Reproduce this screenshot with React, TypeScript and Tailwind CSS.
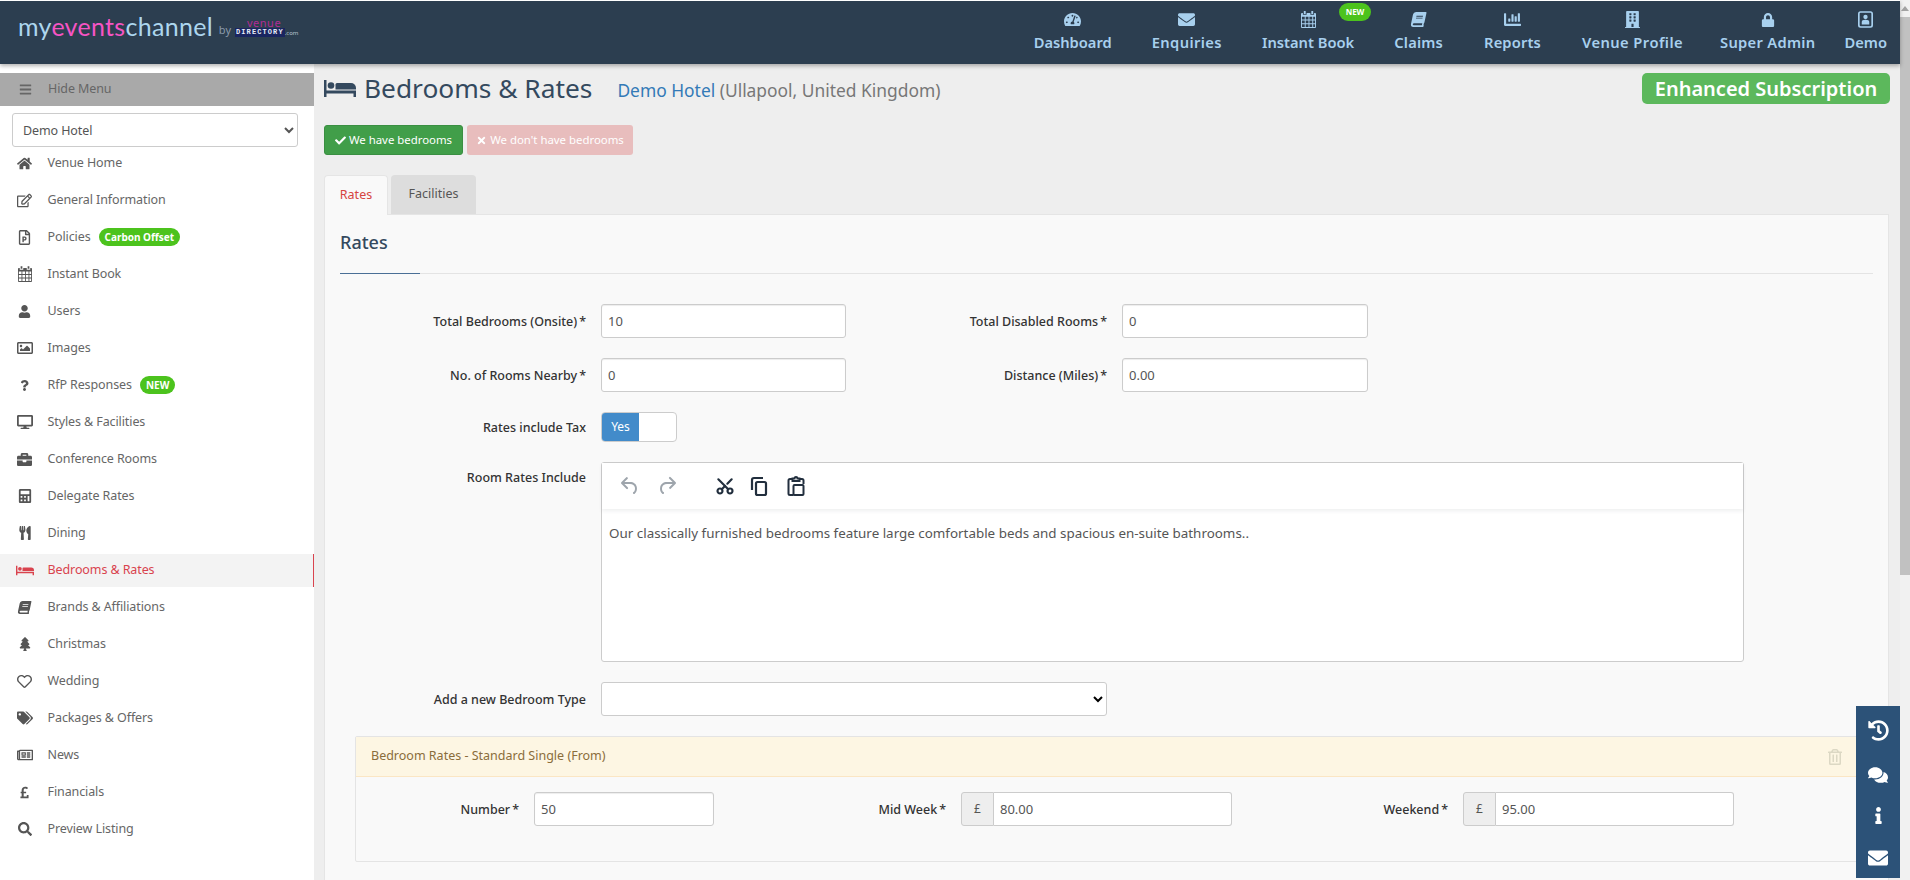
import {
  FaBars, FaBook, FaBriefcase, FaBuilding, FaCalculator, FaChartBar, FaCheck, FaComments, FaDesktop,
  FaEnvelope, FaHistory, FaHome, FaInfo, FaLock, FaPoundSign, FaQuestion,
  FaRegEdit, FaRegFilePowerpoint, FaRegHeart, FaRegImage, FaRegNewspaper, FaRegTrashAlt, FaSearch,
  FaTachometerAlt, FaTags, FaTimes, FaTree, FaUser, FaUtensils,
} from "react-icons/fa";
import { Scissors } from "lucide-react";
import type { ReactNode } from "react";

const FONT = "font-['Noto_Sans','Open_Sans',sans-serif]";

function BedIcon({ className }: { className?: string }) {
  return (
    <svg viewBox="0 0 32 17" className={className} fill="currentColor">
      <path d="M0 0h2.500v10.500H32V17h-2.500v-3.500h-27V17H0z" />
      <circle cx="7" cy="5.500" r="3.300" />
      <path d="M11.500 9.500V4.500A1.500 1.500 0 0 1 13 3h14a5 5 0 0 1 5 5v1.500z" />
    </svg>
  );
}

function CalendarIcon({ className }: { className?: string }) {
  return (
    <svg viewBox="0 0 16 18" className={className} fill="currentColor">
      <path d="M3 0h2v3H3zM11 0h2v3h-2z" />
      <path
        fillRule="evenodd"
        d="M1 2h1v2h4V2h4v2h4V2h1a1 1 0 0 1 1 1v14a1 1 0 0 1-1 1H1a1 1 0 0 1-1-1V3a1 1 0 0 1 1-1zM1 6v3h3V6zm4 0v3h3V6zm4 0v3h3V6zm4 0v3h2V6zM1 10v3h3v-3zm4 0v3h3v-3zm4 0v3h3v-3zm4 0v3h2v-3zM1 14v3h3v-3zm4 0v3h3v-3zm4 0v3h3v-3zm4 0v3h2v-3z"
      />
    </svg>
  );
}

function UserBoxIcon({ className }: { className?: string }) {
  return (
    <svg viewBox="0 0 18 20" className={className} fill="currentColor">
      <path
        fillRule="evenodd"
        d="M3 0h12a3 3 0 0 1 3 3v14a3 3 0 0 1-3 3H3a3 3 0 0 1-3-3V3a3 3 0 0 1 3-3zm0 2a1 1 0 0 0-1 1v14a1 1 0 0 0 1 1h12a1 1 0 0 0 1-1V3a1 1 0 0 0-1-1z"
      />
      <circle cx="9" cy="7" r="2.600" />
      <path d="M4.500 16v-3c0-1.600 1.400-2.600 4.500-2.600s4.500 1 4.500 2.600v3z" />
    </svg>
  );
}

const navItems: { label: string; icon: ReactNode; badge?: boolean; box: string; text: string }[] = [
  { label: "Dashboard", icon: <FaTachometerAlt className="size-[17px]" />, box: "px-[20px]", text: "" },
  { label: "Enquiries", icon: <FaEnvelope className="size-[17px]" />, box: "px-[20px]", text: "tracking-[0.4px]" },
  { label: "Instant Book", icon: <CalendarIcon className="h-[17px] w-[15px]" />, badge: true, box: "px-[20px]", text: "" },
  { label: "Claims", icon: <FaBook className="size-[15px] -skew-x-12" />, box: "pl-[20px] pr-[21px]", text: "tracking-[0.2px]" },
  { label: "Reports", icon: <FaChartBar className="size-[17px]" />, box: "pl-[20px] pr-[21px]", text: "tracking-[0.15px]" },
  { label: "Venue Profile", icon: <FaBuilding className="size-[17px]" />, box: "px-[20px]", text: "tracking-[0.45px]" },
  { label: "Super Admin", icon: <FaLock className="size-[14px]" />, box: "pl-[17px] pr-[15px]", text: "tracking-[0.3px]" },
  { label: "Demo", icon: <UserBoxIcon className="h-[17px] w-[15px]" />, box: "pl-[14px]", text: "" },
];

const sideItems: { label: string; icon: ReactNode; badge?: string; active?: boolean }[] = [
  { label: "Venue Home", icon: <FaHome className="size-[15px]" /> },
  { label: "General Information", icon: <FaRegEdit className="size-[15px]" /> },
  { label: "Policies", icon: <FaRegFilePowerpoint className="size-[15px]" />, badge: "Carbon Offset" },
  { label: "Instant Book", icon: <CalendarIcon className="h-[16px] w-[14px]" /> },
  { label: "Users", icon: <FaUser className="size-[13px]" /> },
  { label: "Images", icon: <FaRegImage className="size-[16px]" /> },
  { label: "RfP Responses", icon: <FaQuestion className="size-[11px]" />, badge: "NEW" },
  { label: "Styles & Facilities", icon: <FaDesktop className="size-[16px]" /> },
  { label: "Conference Rooms", icon: <FaBriefcase className="size-[15px]" /> },
  { label: "Delegate Rates", icon: <FaCalculator className="size-[14px]" /> },
  { label: "Dining", icon: <FaUtensils className="size-[14px]" /> },
  { label: "Bedrooms & Rates", icon: <BedIcon className="h-[11px] w-[18px]" />, active: true },
  { label: "Brands & Affiliations", icon: <FaBook className="size-[13px] -skew-x-12" /> },
  { label: "Christmas", icon: <FaTree className="size-[14px]" /> },
  { label: "Wedding", icon: <FaRegHeart className="size-[15px]" /> },
  { label: "Packages & Offers", icon: <FaTags className="size-[16px]" /> },
  { label: "News", icon: <FaRegNewspaper className="size-[16px]" /> },
  { label: "Financials", icon: <FaPoundSign className="size-[13px]" /> },
  { label: "Preview Listing", icon: <FaSearch className="size-[14px]" /> },
];

function Logo() {
  return (
    <div className="flex items-center pb-[12px] pl-[18px]">
      <span className="font-['Lato',sans-serif] text-[25px] leading-none tracking-[0.3px] text-[#add6ee]">
        my<span className="text-[#f654c4]">events</span>channel
      </span>
      <span className="ml-[6px] mt-[6px] text-[11px] leading-none text-[#8a9bab]">by</span>
      <div className="ml-[4px] flex flex-col items-start">
        <span className="ml-[12px] text-[11px] leading-[11px] tracking-[0.5px] text-[#b02c95]">venue</span>
        <div className="flex items-end">
          <span className="bg-[#1a2560] px-[1px] font-['Liberation_Mono',monospace] text-[7px] font-bold leading-[9px] tracking-[1.1px] text-[#e8ecf8]">
            DIRECTORY
          </span>
          <span className="text-[6px] leading-[8px] text-[#b8c4d0]">.com</span>
        </div>
      </div>
    </div>
  );
}

function Field({ value, className }: { value: string; className: string }) {
  return (
    <input
      readOnly
      value={value}
      className={`h-[34px] rounded-[3px] border border-[#ccc] bg-white px-[6px] text-[13px] text-[#555] shadow-[inset_0_1px_1px_rgba(0,0,0,0.075)] outline-none ${className}`}
    />
  );
}

function Label({ text, required, className }: { text: string; required?: boolean; className: string }) {
  return (
    <label className={`h-[34px] text-right text-[12.5px] font-medium leading-[36px] text-[#333] ${className}`}>
      {text}
      {required && <span className="ml-[2px]">*</span>}
    </label>
  );
}

function PoundField({ value, className }: { value: string; className: string }) {
  return (
    <div className={`flex h-[34px] ${className}`}>
      <span className="flex w-[33px] items-center justify-center rounded-l-[3px] border border-[#ccc] bg-[#eee] text-[12px] text-[#555]">
        £
      </span>
      <input
        readOnly
        value={value}
        className="h-[34px] min-w-0 flex-1 rounded-r-[3px] border border-l-0 border-[#ccc] bg-white px-[6px] text-[13px] text-[#555] outline-none"
      />
    </div>
  );
}

function EditorToolbar() {
  return (
    <div className="flex h-[46px] items-center bg-white pl-[16px] shadow-[0_2px_4px_rgba(34,47,62,0.08)]">
      <svg viewBox="0 0 24 24" className="size-[24px] text-[#9ea5ac]" fill="currentColor">
        <path d="M6.400 8H12c3.700 0 6.200 2 6.800 5.100.6 2.700-.4 5.600-2.300 6.800a1 1 0 0 1-1-1.800c1.100-.6 1.800-2.700 1.400-4.600-.5-2.100-2.100-3.500-4.900-3.500H6.400l3.300 3.300a1 1 0 1 1-1.400 1.400l-5-5a1 1 0 0 1 0-1.400l5-5a1 1 0 0 1 1.400 1.400L6.400 8z" />
      </svg>
      <svg viewBox="0 0 24 24" className="ml-[13px] size-[24px] text-[#9ea5ac]" fill="currentColor">
        <path d="M17.600 10H12c-2.800 0-4.400 1.400-4.900 3.500-.4 2 .3 4 1.400 4.600a1 1 0 1 1-1 1.800c-2-1.200-2.900-4.100-2.300-6.800.6-3 3-5.100 6.800-5.100h5.600l-3.300-3.300a1 1 0 1 1 1.400-1.400l5 5a1 1 0 0 1 0 1.400l-5 5a1 1 0 0 1-1.400-1.400l3.300-3.300z" />
      </svg>
      <Scissors className="ml-[36px] size-[20px] -rotate-90 text-[#222f3e]" strokeWidth={2.6} />
      <svg viewBox="0 0 24 24" className="ml-[12px] size-[24px] text-[#222f3e]" fill="none" stroke="currentColor" strokeWidth="2.200">
        <path d="M5 16V6a2 2 0 0 1 2-2h9" />
        <rect x="9" y="8" width="10" height="13" rx="1.500" />
      </svg>
      <svg viewBox="0 0 24 24" className="ml-[13px] size-[24px] text-[#222f3e]" fill="none" stroke="currentColor" strokeWidth="2">
        <path d="M8.500 5H6a1.500 1.500 0 0 0-1.500 1.500v13A1.500 1.500 0 0 0 6 21h3.500" />
        <path d="M15.500 5H18a1.500 1.500 0 0 1 1.500 1.500V10" />
        <path d="M8.500 7V4.500h2a1.500 1.500 0 0 1 3 0h2V7z" />
        <rect x="9.500" y="11" width="10" height="10" rx="1" />
      </svg>
    </div>
  );
}

export default function App() {
  return (
    <div className={`relative flex h-[880px] w-[1910px] overflow-hidden bg-[#eee] ${FONT}`}>
      <div className="flex w-[1900px] flex-col">
        <header className="relative z-10 flex h-[64px] shrink-0 items-center justify-between border-t border-white bg-[#2c3e50] shadow-[0_2px_4px_rgba(0,0,0,0.3)]">
          <Logo />
          <nav className="flex pr-[13px]">
            {navItems.map((item) => (
              <div key={item.label} className={`relative flex flex-col items-center text-[#a8d0ee] ${item.box}`}>
                <div className="flex h-[17px] items-center">{item.icon}</div>
                <span className={`mt-[2px] whitespace-nowrap text-[14.7px] font-semibold leading-[24px] ${item.text}`}>{item.label}</span>
                {item.badge && (
                  <span className="absolute left-[97px] top-[-8px] flex h-[18px] w-[32px] items-center justify-center rounded-[9px] bg-[#4cc31d] text-[8px] font-bold text-white">
                    NEW
                  </span>
                )}
              </div>
            ))}
          </nav>
        </header>

        <div className="flex min-h-0 flex-1">
          <aside className="flex w-[314px] shrink-0 flex-col bg-white pt-[9px] text-[12.5px] tracking-[-0.1px] text-[#666]">
            <div className="flex h-[33px] items-center bg-[#a9a9a9] pl-[19px] text-[#666]">
              <FaBars className="size-[13px]" />
              <span className="ml-[16px]">Hide Menu</span>
            </div>
            <div className="pl-[12px] pr-[16px] pt-[7px]">
              <select className="h-[34px] w-full rounded-[3px] border border-[#ccc] bg-white pl-[6px] text-[12.5px] text-[#555]">
                <option>Demo Hotel</option>
              </select>
            </div>
            <ul>
              {sideItems.map((item) => (
                <li
                  key={item.label}
                  className={`mb-[4px] flex h-[33px] items-center pb-[1px] ${item.active ? "border-r border-[#d9434e] bg-[#f3f3f3] text-[#d9434e]" : ""}`}
                >
                  <span className={`flex w-[47.5px] shrink-0 justify-center pl-[2px] ${item.active ? "" : "text-[#555]"}`}>{item.icon}</span>
                  <span>{item.label}</span>
                  {item.badge && (
                    <span className="ml-[8px] flex h-[18px] items-center rounded-[9px] bg-[#4cc31d] px-[6px] text-[10px] font-bold tracking-[0px] text-white">
                      {item.badge}
                    </span>
                  )}
                </li>
              ))}
            </ul>
          </aside>

          <main className="min-w-0 flex-1 pl-[10px] pr-[10px] pt-[9px]">
            <div className="flex h-[31px] items-center justify-between">
              <div className="flex items-center">
                <BedIcon className="h-[17px] w-[32px] text-[#34495e]" />
                <h1 className="ml-[8px] text-[26.300px] leading-[31px] text-[#34495e]">Bedrooms &amp; Rates</h1>
                <span className="ml-[25px] mt-[3px] text-[17.400px] text-[#777]">
                  <span className="text-[#337ab7]">Demo Hotel</span> (Ullapool, United Kingdom)
                </span>
              </div>
              <div className="flex h-[31px] w-[248px] items-center justify-center rounded-[5px] bg-[#5cb85c] text-[20px] font-semibold text-white">
                Enhanced Subscription
              </div>
            </div>

            <div className="mt-[21px] flex gap-[4px]">
              <button className="flex h-[30px] w-[139px] items-center justify-center gap-[3px] rounded-[3px] border border-[#3a8f42] bg-[#419e49] text-[11.400px] text-white">
                <FaCheck className="size-[11px]" />
                We have bedrooms
              </button>
              <button className="flex h-[30px] w-[166px] items-center justify-center gap-[3px] rounded-[3px] bg-[#e8bdbd] text-[11.400px] text-white">
                <FaTimes className="size-[11px]" />
                We don't have bedrooms
              </button>
            </div>

            <div className="relative z-[1] mt-[20px] flex h-[39px] gap-[3px]">
              <div className="flex h-[40px] w-[64px] items-center justify-center rounded-t-[4px] border border-b-0 border-[#e5e5e5] bg-[#f9f9f9] text-[12.500px] text-[#d64541]">
                Rates
              </div>
              <div className="flex h-[39px] w-[85px] items-center justify-center rounded-t-[4px] bg-[#ddd] text-[12.500px] text-[#555]">
                Facilities
              </div>
            </div>

            <section className="mr-[1px] h-[800px] border border-[#e5e5e5] bg-[#f9f9f9] px-[15px]">
              <h2 className="pt-[15px] text-[18px] font-medium leading-[25px] text-[#34495e]">Rates</h2>
              <div className="mt-[18px] flex h-[1px]">
                <div className="w-[80px] bg-[#4a6f96]" />
                <div className="flex-1 bg-[#e4e4e4]" />
              </div>

              <div className="mt-[30px] flex">
                <Label text="Total Bedrooms (Onsite)" required className="w-[246px]" />
                <Field value="10" className="ml-[15px] w-[245px]" />
                <Label text="Total Disabled Rooms" required className="w-[261px]" />
                <Field value="0" className="ml-[15px] w-[246px]" />
              </div>
              <div className="mt-[20px] flex">
                <Label text="No. of Rooms Nearby" required className="w-[246px]" />
                <Field value="0" className="ml-[15px] w-[245px]" />
                <Label text="Distance (Miles)" required className="w-[261px]" />
                <Field value="0.00" className="ml-[15px] w-[246px]" />
              </div>
              <div className="mt-[20px] flex">
                <label className="h-[30px] w-[246px] text-right text-[12.500px] font-medium leading-[32px] text-[#333]">Rates include Tax</label>
                <div className="ml-[15px] flex h-[30px] w-[76px] overflow-hidden rounded-[4px] border border-[#ccc] bg-white">
                  <span className="flex w-[37px] items-center justify-center bg-[#428bca] text-[12px] text-white">Yes</span>
                </div>
              </div>
              <div className="mt-[20px] flex">
                <label className="w-[246px] text-right text-[12.500px] font-medium leading-[32px] text-[#333]">Room Rates Include</label>
                <div className="ml-[15px] h-[200px] w-[1143px] rounded-[3px] border border-[#ccc] bg-white">
                  <EditorToolbar />
                  <p className="pl-[7px] pt-[14px] text-[13.400px] leading-[20px] text-[#555]">
                    Our classically furnished bedrooms feature large comfortable beds and spacious en-suite bathrooms..
                  </p>
                </div>
              </div>
              <div className="mt-[20px] flex">
                <label className="h-[34px] w-[246px] text-right text-[12.500px] font-medium leading-[36px] text-[#333]">Add a new Bedroom Type</label>
                <select className="ml-[15px] h-[34px] w-[506px] rounded-[3px] border border-[#ccc] bg-white" />
              </div>

              <div className="ml-[15px] mr-[15px] mt-[20px] h-[126px] rounded-[2px] border border-[#e4e4e4] bg-[#f9f9f9]">
                <div className="flex h-[40px] items-center justify-between border-b border-[#fbe6c4] bg-[#fdf6e3] pl-[15px] pr-[14px]">
                  <span className="text-[12.500px] text-[#8a6d3b]">Bedroom Rates - Standard Single (From)</span>
                  <FaRegTrashAlt className="size-[16px] text-[#dcd8c4]" />
                </div>
                <div className="mt-[15px] flex">
                  <Label text="Number" required className="w-[163px]" />
                  <Field value="50" className="ml-[15px] w-[180px]" />
                  <Label text="Mid Week" required className="w-[232px]" />
                  <PoundField value="80.00" className="ml-[15px] w-[271px]" />
                  <Label text="Weekend" required className="w-[216px]" />
                  <PoundField value="95.00" className="ml-[15px] w-[271px]" />
                </div>
              </div>
            </section>
          </main>
        </div>
      </div>

      <div className="flex w-[10px] flex-col items-center bg-[#f1f1f1]">
        <svg viewBox="0 0 8 5" className="mt-[6px] h-[5px] w-[8px] text-[#a3a3a3]" fill="currentColor">
          <path d="M4 0l4 5H0z" />
        </svg>
        <div className="mt-[6px] h-[558px] w-full bg-[#c1c1c1]" />
      </div>

      <div className="absolute left-[1856px] top-[706px] flex h-[172px] w-[44px] flex-col items-center bg-[#2c5278] pt-[14px] text-white">
        <FaHistory className="size-[21px]" />
        <FaComments className="mt-[24px] size-[20px]" />
        <FaInfo className="mt-[22px] size-[17px]" />
        <FaEnvelope className="mt-[24px] size-[20px]" />
      </div>
    </div>
  );
}
